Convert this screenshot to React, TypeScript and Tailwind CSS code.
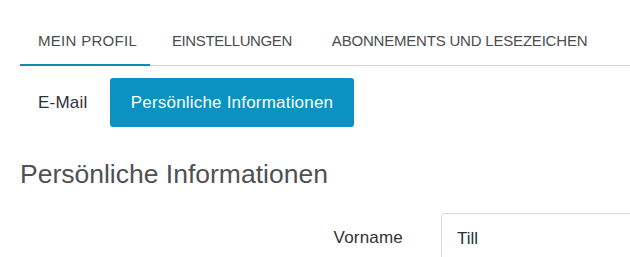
export default function App() {
  return (
    <div className="w-[630px] h-[257px] overflow-hidden bg-white pl-5 font-['Liberation_Sans',Arial,sans-serif]">
      <div className="flex items-end h-[66px] border-b border-[#d4d6d8] whitespace-nowrap text-[15px] leading-[18px] text-[#4a4d50]">
        <div className="relative h-full pt-[32px] pl-[18px] w-[130px] shrink-0 tracking-[0.3px]">
          MEIN PROFIL
          <div className="absolute left-0 right-0 -bottom-px h-[2px] bg-[#1189b7]" />
        </div>
        <div className="h-full pt-[32px] pl-[22px] pr-[20px] tracking-[-0.4px]">EINSTELLUNGEN</div>
        <div className="h-full pt-[32px] pl-[20px] tracking-[-0.2px]">ABONNEMENTS UND LESEZEICHEN</div>
      </div>
      <div className="flex mt-3 h-[49px] items-stretch">
        <div className="w-[90px] flex items-center pl-[18px] text-[17px] text-[#2f3235] tracking-[0.2px]">E-Mail</div>
        <div className="w-[244px] flex items-center justify-center rounded-[3px] bg-[#0992c2] text-[17px] text-white tracking-[0.2px]">
          Persönliche Informationen
        </div>
      </div>
      <h2 className="mt-[32px] text-[26.5px] leading-[30px] text-[#4e5154]">Persönliche Informationen</h2>
      <div className="flex mt-[24px] items-start">
        <div className="w-[421px] shrink-0 pr-[38px] pt-[12px] text-right text-[17px] text-[#2f3235] tracking-[0.2px]">Vorname</div>
        <div className="w-[240px] shrink-0 h-[50px] border border-[#d9d9d9] rounded-[3px] pl-[15px] pt-[12px] text-[17px] text-[#2f3235]">
          Till
        </div>
      </div>
    </div>
  );
}
